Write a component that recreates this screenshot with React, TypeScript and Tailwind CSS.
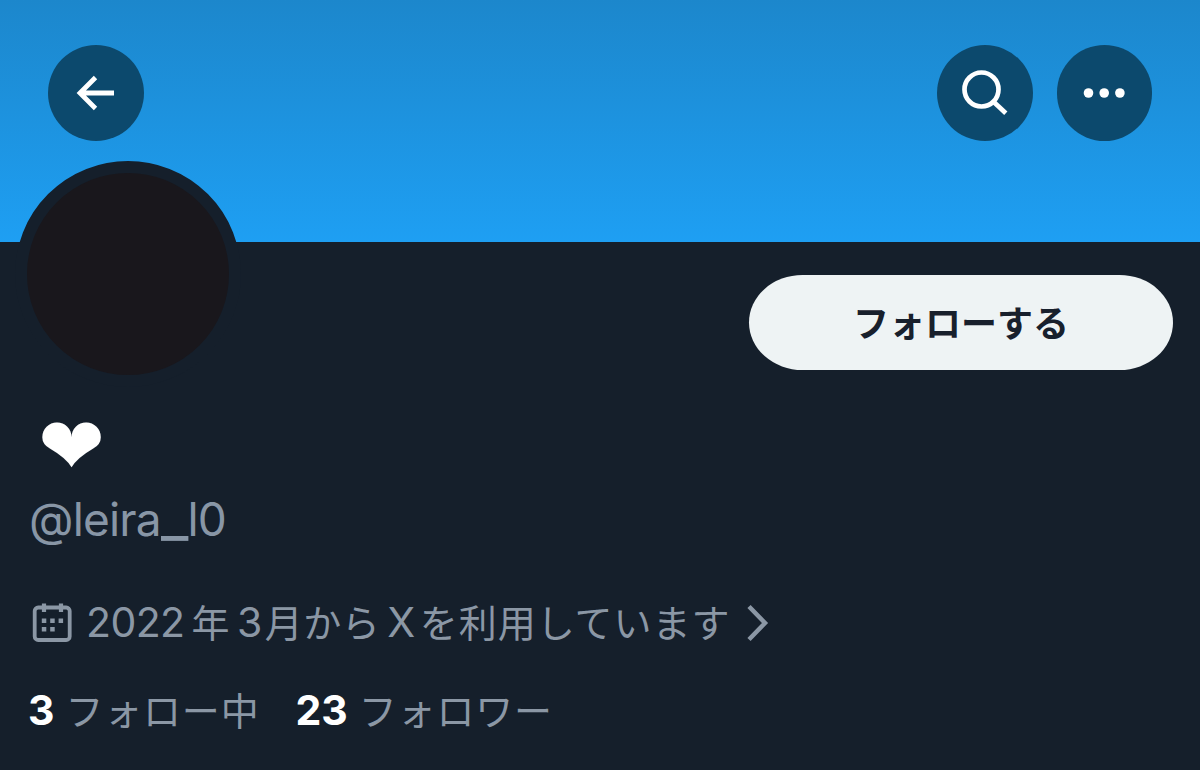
import type { ReactNode } from "react";

const stats = [
  { count: "3", label: "フォロー中" },
  { count: "23", label: "フォロワー" },
];

function CircleButton({ label, children }: { label: string; children: ReactNode }) {
  return (
    <button
      aria-label={label}
      className="flex size-[95.5px] items-center justify-center rounded-full bg-[#0c496d] text-white"
    >
      {children}
    </button>
  );
}

function Latin({ children }: { children: ReactNode }) {
  return <span className="font-['Inter',sans-serif] text-[41px] tracking-[-0.6px]">{children}</span>;
}

function CalendarIcon() {
  return (
    <svg viewBox="0 0 40 40" className="mt-0.5 size-10 shrink-0" fill="none">
      <rect x="2.7" y="4.5" width="35" height="32.500" rx="3.500" stroke="currentColor" strokeWidth="3.800" />
      <path d="M12 .5v8.500M29 .5v8.500" stroke="currentColor" strokeWidth="4.200" />
      <path
        d="M9.800 15.500h4.500v4.500h-4.500zM18.200 15.500h4.500v4.500h-4.500zM26.600 15.500h4.500v4.500h-4.500zM9.800 24h4.500v4.500h-4.500zM18.200 24h4.500v4.500h-4.500z"
        fill="currentColor"
      />
    </svg>
  );
}

function App() {
  return (
    <div className="flex h-[770px] w-[1200px] flex-col overflow-hidden bg-[#151f2b] font-['Noto_Sans_CJK_JP',sans-serif]">
      {/* Banner */}
      <header className="flex h-[242px] shrink-0 items-start justify-between bg-linear-to-b from-[#1c87cc] to-[#1e9ff3] px-12 pt-[45px]">
        <CircleButton label="戻る">
          <svg viewBox="0 0 96 96" className="size-24 shrink-0" fill="none" stroke="currentColor" strokeWidth="4.800">
            <path d="M66 48H32M47.500 32.500 32 48l15.500 15.500" />
          </svg>
        </CircleButton>
        <div className="flex gap-6">
          <CircleButton label="検索">
            <svg viewBox="0 0 96 96" className="size-24 shrink-0" fill="none" stroke="currentColor" strokeWidth="4.700">
              <circle cx="44.500" cy="44.500" r="17" />
              <path d="M56 56.200 68.800 68.200" />
            </svg>
          </CircleButton>
          <CircleButton label="その他">
            <svg viewBox="0 0 96 96" className="size-24 shrink-0" fill="currentColor">
              <circle cx="32.500" cy="48" r="4.800" />
              <circle cx="48.200" cy="48" r="4.800" />
              <circle cx="63.900" cy="48" r="4.800" />
            </svg>
          </CircleButton>
        </div>
      </header>

      {/* Avatar and follow button */}
      <div className="flex h-[145px] shrink-0 items-start justify-between pr-[27px] pl-[15px]">
        <div className="-mt-[81px] size-[226px] rounded-full border-12 border-[#151f2b] bg-[#19171c]" />
        <button className="mt-[33px] flex h-[95px] w-[424px] items-center justify-center rounded-[54px/48px] bg-[#eef3f4] pb-1 text-[36px] font-bold text-[#18202c]">
          フォローする
        </button>
      </div>

      {/* Name */}
      <div className="flex flex-col pl-[29px]">
        <h1 className="mt-[25px] h-[67px] pl-[9px] font-['DejaVu_Sans',sans-serif] text-[80px] leading-[70px] text-white">
          ❤
        </h1>
        <p className="mt-3 h-[57px] font-['Inter',sans-serif] text-[46px] leading-[56px] tracking-[-0.8px] text-[#8896a6]">
          @leira<span className="text-[60px] leading-[0]">_</span>l0
        </p>
      </div>

      {/* Join date */}
      <div className="mt-[44px] flex h-[60px] items-center pl-8 text-[#8b97a5]">
        <CalendarIcon />
        <p className="-mt-0.5 ml-[14px] flex items-baseline gap-[7px] text-[38px] leading-[60px] tracking-[0.5px] whitespace-nowrap">
          <Latin>2022</Latin>
          <span>年</span>
          <span className="flex items-baseline gap-[3px]">
            <Latin>3</Latin>月から
          </span>
          <Latin>X</Latin>
          <span className="-ml-0.5 tracking-[1px]">を利用しています</span>
        </p>
        <svg viewBox="0 0 24 40" className="mt-0.5 ml-[15px] h-10 w-6 shrink-0" fill="none" stroke="currentColor" strokeWidth="4.500">
          <path d="M3 3.500 19 20 3 36.500" />
        </svg>
      </div>

      {/* Follow counts */}
      <div className="mt-[27px] flex pl-7">
        {stats.map((stat) => (
          <p key={stat.label} className="mr-9 flex items-baseline gap-[11px] leading-[60px] whitespace-nowrap">
            <span className="font-['Inter',sans-serif] text-[41px] font-bold text-white">{stat.count}</span>
            <span className="text-[38px] tracking-[0.8px] text-[#8b97a5]">{stat.label}</span>
          </p>
        ))}
      </div>
    </div>
  );
}

export default App;
